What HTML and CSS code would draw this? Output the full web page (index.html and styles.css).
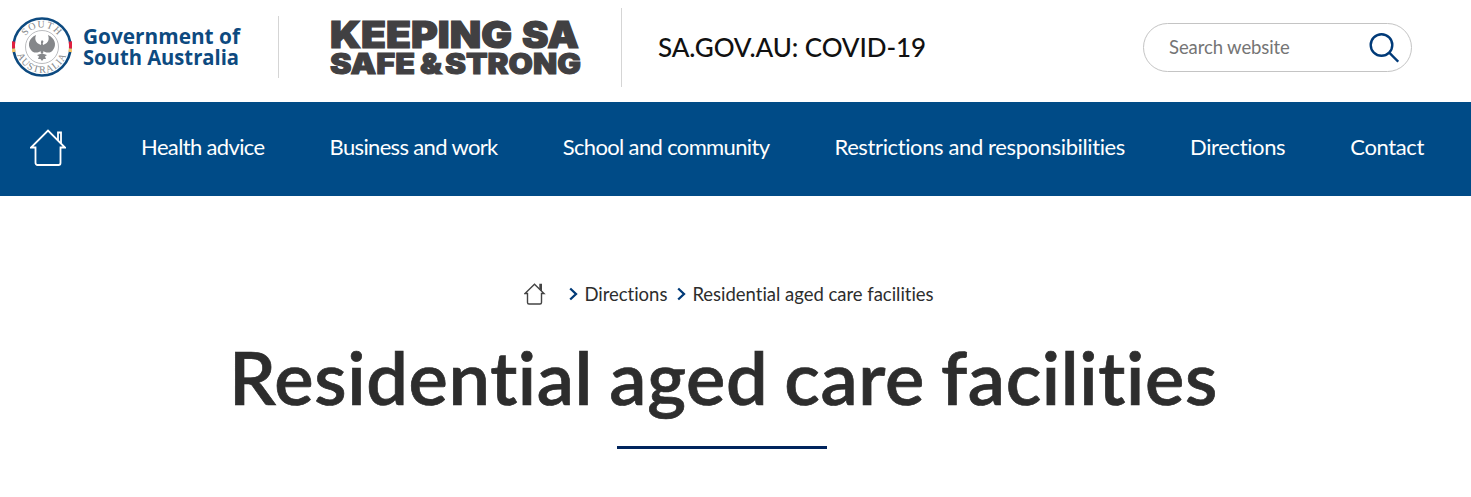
FILE: index.html
```html
<!DOCTYPE html>
<html lang="en">
<head>
    <meta charset="UTF-8">
    <meta name="viewport" content="width=device-width, initial-scale=1.0">
    <title>Residential aged care facilities | SA.GOV.AU: COVID-19</title>
    <link rel="stylesheet" href="styles.css">
</head>
<body>
    <header class="header">
        <a class="gov-logo" href="#">
            <svg class="crest" viewBox="0 0 60 62">
                <defs>
                    <path id="arcTop" d="M10.5 31a19.500 19.500 0 0 1 39 0" />
                    <path id="arcBottom" d="M4.800 25.500a25.800 25.800 0 1 0 50.400 0" />
                </defs>
                <circle cx="30" cy="31" r="28.500" fill="#fff" stroke="#0d4a80" stroke-width="2.600" />
                <path d="M1.600 25.500a28.700 28.700 0 0 0-.2 7M58.400 25.500a28.700 28.700 0 0 1 .2 7" fill="none" stroke="#e0203f" stroke-width="3.500" />
                <path d="M1.400 32.500l.4 3.500M58.600 32.500l-.4 3.500" stroke="#f3c46b" stroke-width="3.500" />
                <circle cx="30" cy="31" r="16.500" fill="none" stroke="#a9abae" stroke-width=".8" />
                <text class="crest-text"><textPath href="#arcTop" startOffset="50%">SOUTH</textPath></text>
                <text class="crest-text"><textPath href="#arcBottom" startOffset="50%">AUSTRALIA</textPath></text>
                <!-- piping shrike: wings, body, tail -->
                <g fill="#85878a">
                    <path d="M24 19c-7 3-9 10-5 15 2 3 5 3 8 2l2-1v-6c-3-1-5-3-5.500-5-.4-2 0-3.500.5-5z" />
                    <path d="M36 19c7 3 9 10 5 15-2 3-5 3-8 2l-2-1v-6c3-1 5-3 5.500-5 .4-2 0-3.500-.5-5z" />
                    <path d="M30 24l1.500 1.500-.8 2 1.300 5-1 5h-2l-1-5 1.200-5c-.5-1.500 0-2.500.8-3.500z" />
                    <path d="M25 39l5-1.500 5 1.500-2 1.500 1 2.500h-2.500l-1.500 2-1.500-2H26l1-2.500z" />
                </g>
            </svg>
            <svg class="gov-name" viewBox="0 0 160 50">
                <text x="0" y="22" textLength="157" lengthAdjust="spacingAndGlyphs">Government of</text>
                <text x="0" y="43" textLength="156" lengthAdjust="spacingAndGlyphs">South Australia</text>
            </svg>
        </a>
        <a class="campaign-logo" href="#">
            <svg viewBox="0 0 254 60">
                <text class="campaign-top" x="0" y="29" textLength="182" lengthAdjust="spacingAndGlyphs">KEEPING</text>
                <text class="campaign-top" x="192" y="29" textLength="57" lengthAdjust="spacingAndGlyphs">SA</text>
                <text class="campaign-bottom" x="0" y="55" textLength="85" lengthAdjust="spacingAndGlyphs">SAFE</text>
                <text class="campaign-bottom" x="90" y="55" textLength="22" lengthAdjust="spacingAndGlyphs">&amp;</text>
                <text class="campaign-bottom" x="115" y="55" textLength="136" lengthAdjust="spacingAndGlyphs">STRONG</text>
            </svg>
        </a>
        <a class="site-name" href="#">SA.GOV.AU: COVID-19</a>
        <form class="search">
            <input class="search-input" type="text" placeholder="Search website">
            <svg class="search-icon" viewBox="0 0 30 30">
                <circle cx="12.500" cy="12" r="10.800" />
                <path d="M20.200 19.700l9 9" />
            </svg>
        </form>
    </header>

    <nav class="nav">
        <a class="nav-home" href="#">
            <svg viewBox="0 0 36 38">
                <path d="M5.500 18.500H1L18 1.500l17 17h-4.500V34a2 2 0 0 1-2 2h-21a2 2 0 0 1-2-2z" />
                <path d="M28 11V3.500h3V14" />
            </svg>
        </a>
        <a class="nav-link" href="#">Health advice</a>
        <a class="nav-link" href="#">Business and work</a>
        <a class="nav-link" href="#">School and community</a>
        <a class="nav-link nav-link-wide" href="#">Restrictions and responsibilities</a>
        <a class="nav-link nav-link-wide" href="#">Directions</a>
        <a class="nav-link nav-link-wide" href="#">Contact</a>
    </nav>

    <main class="content">
        <div class="breadcrumb">
            <a class="breadcrumb-home" href="#">
                <svg viewBox="0 0 22 22">
                    <path d="M3.500 10.500H1L10.500 1.200l9.500 9.300h-2.500v9a1.500 1.500 0 0 1-1.500 1.500H5a1.500 1.500 0 0 1-1.500-1.500z" />
                    <path d="M16 6.500V1.500h1.300V8" />
                </svg>
            </a>
            <svg class="chevron" viewBox="0 0 9 14"><path d="M1.200 1.500L7 7l-5.800 5.500" /></svg>
            <a class="crumb" href="#">Directions</a>
            <svg class="chevron" viewBox="0 0 9 14"><path d="M1.200 1.500L7 7l-5.800 5.500" /></svg>
            <span class="crumb">Residential aged care facilities</span>
        </div>
        <h1 class="title">Residential aged care facilities</h1>
        <div class="title-line"></div>
    </main>
</body>
</html>
```
FILE: styles.css
```css
* {
    margin: 0;
    padding: 0;
    box-sizing: border-box;
}

body {
    font-family: Lato, sans-serif;
    font-variant-ligatures: none;
    background: #fff;
    color: #2d2d2d;
    overflow: hidden;
}

a {
    color: inherit;
    text-decoration: none;
}

svg {
    display: block;
}

.header {
    display: flex;
    height: 102px;
    padding-left: 12px;
}

.gov-logo {
    display: flex;
    gap: 11px;
    width: 267px;
    height: 62px;
    margin-top: 16px;
    border-right: 1px solid #d5d5d5;
}

.crest {
    width: 60px;
    height: 62px;
}

.crest-text {
    font-family: "Liberation Serif", serif;
    font-size: 10px;
    letter-spacing: 1px;
    fill: #85878a;
    text-anchor: middle;
}

.gov-name {
    width: 160px;
    height: 50px;
    margin-top: 6px;
    font-family: "Open Sans", sans-serif;
    font-size: 20.5px;
    font-weight: 700;
    fill: #0d4a80;
}

.campaign-logo {
    width: 343px;
    height: 79px;
    margin-top: 8px;
    padding: 11px 0 0 51px;
    border-right: 1px solid #d5d5d5;
}

.campaign-logo svg {
    width: 254px;
    height: 60px;
    overflow: visible;
    font-family: Inter, sans-serif;
    font-weight: 900;
    fill: #414042;
    stroke: #414042;
}

.campaign-top {
    font-size: 36.5px;
    stroke-width: 1.2px;
}

.campaign-bottom {
    font-size: 28px;
    stroke-width: 1px;
}

.site-name {
    width: 521px;
    padding-left: 36px;
    color: #111;
    font-size: 26px;
    font-weight: 500;
    letter-spacing: -0.1px;
    line-height: 94px;
}

.search {
    display: flex;
    align-items: center;
    justify-content: space-between;
    width: 269px;
    height: 49px;
    margin-top: 23px;
    padding: 0 12px 0 25px;
    border: 1px solid #c4c4c4;
    border-radius: 25px;
}

.search-input {
    width: 160px;
    margin-bottom: 2px;
    border: none;
    outline: none;
    font-family: inherit;
    font-size: 18.5px;
    letter-spacing: -0.1px;
}

.search-input::placeholder {
    color: #757575;
}

.search-icon {
    width: 30px;
    height: 30px;
    fill: none;
    stroke: #003a78;
    stroke-width: 2.4;
}

.nav {
    display: flex;
    justify-content: space-between;
    align-items: center;
    height: 94px;
    padding: 0 47px 3px 30px;
    background: #004b87;
    color: #fff;
}

.nav-home {
    width: 36px;
    margin-right: 10px;
}

.nav-home svg {
    width: 36px;
    height: 38px;
    fill: none;
    stroke: #fff;
    stroke-width: 1.8;
}

.nav-link {
    margin-top: -1px;
    font-size: 22px;
    letter-spacing: -0.65px;
    line-height: 30px;
    white-space: nowrap;
}

.nav-link-wide {
    letter-spacing: -0.38px;
}

.content {
    display: flex;
    flex-direction: column;
    align-items: center;
}

.breadcrumb {
    display: flex;
    align-items: center;
    height: 24px;
    margin-top: 86px;
    margin-right: 13px;
}

.breadcrumb-home {
    margin-right: 23px;
}

.breadcrumb-home svg {
    width: 22px;
    height: 22px;
    fill: none;
    stroke: #444;
    stroke-width: 1.4;
}

.chevron {
    width: 9px;
    height: 14px;
    margin-right: 6px;
    fill: none;
    stroke: #003a78;
    stroke-width: 2.3;
}

.crumb {
    font-size: 18.5px;
    letter-spacing: -0.02px;
    line-height: 24px;
}

.crumb + .chevron {
    margin-left: 10px;
}

.title {
    margin-top: 26px;
    margin-right: 24px;
    font-size: 74px;
    font-weight: 600;
    letter-spacing: 0.65px;
    word-spacing: -3px;
    line-height: 90px;
    white-space: nowrap;
    -webkit-text-stroke: 0.7px #2d2d2d;
}

.title-line {
    width: 210px;
    height: 3px;
    margin-top: 24px;
    margin-right: 27px;
    background: #00245d;
}
```
